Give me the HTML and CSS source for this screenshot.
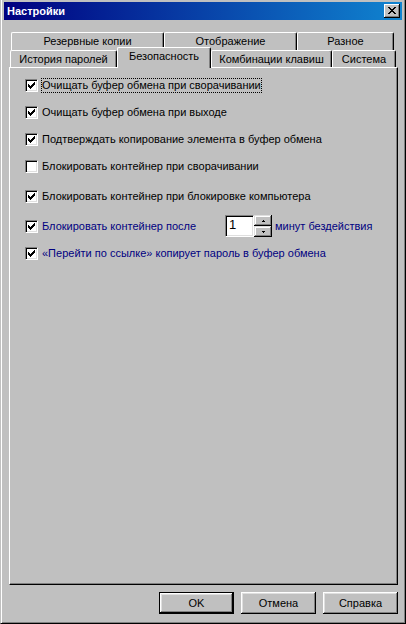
FILE: index.html
```html
<!DOCTYPE html>
<html lang="ru">
<head>
<meta charset="utf-8">
<title>Настройки</title>
<link rel="stylesheet" href="styles.css">
</head>
<body>
<div class="window">
  <div class="titlebar">
    <span class="title">Настройки</span>
    <span class="close"><svg width="8" height="7" viewBox="0 0 8 7" shape-rendering="crispEdges"><path d="M0 0h2v1H0zM6 0h2v1H6zM1 1h2v1H1zM5 1h2v1H5zM2 2h4v1H2zM3 3h2v1H3zM2 4h4v1H2zM1 5h2v1H1zM5 5h2v1H5zM0 6h2v1H0zM6 6h2v1H6z"/></svg></span>
  </div>
  <div class="content">
    <div class="tabs">
      <div class="tabrow tabrow-top">
        <div class="tab w-backup">Резервные копии</div>
        <div class="tab w-view">Отображение</div>
        <div class="tab w-misc">Разное</div>
      </div>
      <div class="tabrow tabrow-bottom">
        <div class="tab w-history">История паролей</div>
        <div class="tab tab-active w-security">Безопасность</div>
        <div class="tab w-keys">Комбинации клавиш</div>
        <div class="tab w-system">Система</div>
      </div>
    </div>
    <div class="panel">
      <div class="row r1">
        <span class="cb"><svg width="7" height="7" viewBox="0 0 7 7" shape-rendering="crispEdges"><path d="M0 2h1v3H0zM1 3h1v3H1zM2 4h1v3H2zM3 3h1v3H3zM4 2h1v3H4zM5 1h1v3H5zM6 0h1v3H6z"/></svg></span>
        <span class="label focus">Очищать буфер обмена при сворачивании</span>
      </div>
      <div class="row">
        <span class="cb"><svg width="7" height="7" viewBox="0 0 7 7" shape-rendering="crispEdges"><path d="M0 2h1v3H0zM1 3h1v3H1zM2 4h1v3H2zM3 3h1v3H3zM4 2h1v3H4zM5 1h1v3H5zM6 0h1v3H6z"/></svg></span>
        <span class="label">Очищать буфер обмена при выходе</span>
      </div>
      <div class="row">
        <span class="cb"><svg width="7" height="7" viewBox="0 0 7 7" shape-rendering="crispEdges"><path d="M0 2h1v3H0zM1 3h1v3H1zM2 4h1v3H2zM3 3h1v3H3zM4 2h1v3H4zM5 1h1v3H5zM6 0h1v3H6z"/></svg></span>
        <span class="label">Подтверждать копирование элемента в буфер обмена</span>
      </div>
      <div class="row">
        <span class="cb"></span>
        <span class="label">Блокировать контейнер при сворачивании</span>
      </div>
      <div class="row r5">
        <span class="cb"><svg width="7" height="7" viewBox="0 0 7 7" shape-rendering="crispEdges"><path d="M0 2h1v3H0zM1 3h1v3H1zM2 4h1v3H2zM3 3h1v3H3zM4 2h1v3H4zM5 1h1v3H5zM6 0h1v3H6z"/></svg></span>
        <span class="label">Блокировать контейнер при блокировке компьютера</span>
      </div>
      <div class="row r6 blue">
        <span class="cb"><svg width="7" height="7" viewBox="0 0 7 7" shape-rendering="crispEdges"><path d="M0 2h1v3H0zM1 3h1v3H1zM2 4h1v3H2zM3 3h1v3H3zM4 2h1v3H4zM5 1h1v3H5zM6 0h1v3H6z"/></svg></span>
        <span class="label label-fixed">Блокировать контейнер после</span>
        <span class="edit">1</span>
        <span class="spin">
          <span class="spinbtn"><svg width="3" height="2" viewBox="0 0 3 2" shape-rendering="crispEdges"><path d="M1 0h1v1H1zM0 1h3v1H0z"/></svg></span>
          <span class="spinbtn"><svg width="3" height="2" viewBox="0 0 3 2" shape-rendering="crispEdges"><path d="M0 0h3v1H0zM1 1h1v1H1z"/></svg></span>
        </span>
        <span class="after">минут бездействия</span>
      </div>
      <div class="row r7 blue">
        <span class="cb"><svg width="7" height="7" viewBox="0 0 7 7" shape-rendering="crispEdges"><path d="M0 2h1v3H0zM1 3h1v3H1zM2 4h1v3H2zM3 3h1v3H3zM4 2h1v3H4zM5 1h1v3H5zM6 0h1v3H6z"/></svg></span>
        <span class="label">«Перейти по ссылке» копирует пароль в буфер обмена</span>
      </div>
    </div>
    <div class="buttons">
      <button class="btn btn-default">OK</button>
      <button class="btn">Отмена</button>
      <button class="btn">Справка</button>
    </div>
  </div>
</div>
</body>
</html>
```

FILE: styles.css
```css
* { box-sizing: border-box; }
html, body { margin: 0; padding: 0; background: #c0c0c0; }
body {
  font-family: "Liberation Sans", Arial, sans-serif;
  font-size: 11px;
  color: #000;
}
.window {
  width: 406px;
  height: 624px;
  background: #c0c0c0;
  border-left: 1px solid #c0c0c0;
  border-right: 1px solid #000;
  border-bottom: 1px solid #000;
  box-shadow: inset 1px 0 #fff, inset -1px -1px #808080;
  padding: 2px 3px 2px 3px;
  display: flex;
  flex-direction: column;
}
.titlebar {
  height: 18px;
  background: linear-gradient(90deg, #000080, #1084d0);
  display: flex;
  align-items: center;
  justify-content: space-between;
  padding: 0 2px 0 3px;
}
.title {
  color: #fff;
  font-weight: bold;
  font-size: 11px;
  line-height: 13px;
}
.close {
  width: 16px;
  height: 14px;
  background: #c0c0c0;
  box-shadow: inset -1px -1px #000, inset 1px 1px #fff, inset -2px -2px #808080;
  display: flex;
  align-items: center;
  justify-content: center;
  padding: 0 1px 1px 0;
}
.close svg { display: block; }
.content {
  padding: 12px 0 0 5px;
  display: flex;
  flex-direction: column;
}
.tabs { display: flex; flex-direction: column; width: 389px; }
.tabrow { display: flex; }
.tabrow-top { height: 18px; padding-left: 2px; }
.tabrow-bottom { height: 17px; padding-left: 1px; align-items: flex-end; }
.tab {
  height: 100%;
  border-top: 1px solid #fff;
  border-left: 1px solid #fff;
  border-right: 1px solid #000;
  border-radius: 2px 2px 0 0;
  box-shadow: inset -1px 0 #808080;
  background: #c0c0c0;
  display: flex;
  justify-content: center;
  align-items: center;
  line-height: 13px;
  white-space: nowrap;
  padding-bottom: 1px;
}
.tabrow-bottom .tab { padding-bottom: 0; }
.tab-active {
  height: 21px;
  margin-bottom: -1px;
  position: relative;
  z-index: 2;
  padding-bottom: 4px !important;
}
.w-backup { width: 153px; }
.w-view { width: 133px; }
.w-misc { width: 97px; }
.w-history { width: 107px; }
.w-security { width: 94px; }
.w-keys { width: 121px; }
.w-system { width: 64px; }
.panel {
  position: relative;
  z-index: 1;
  width: 389px;
  height: 518px;
  border: 1px solid;
  border-color: #fff #000 #000 #fff;
  box-shadow: inset -1px -1px #808080;
  padding: 10px 0 0 15px;
  display: flex;
  flex-direction: column;
  gap: 12px;
}
.row { display: flex; align-items: center; height: 15px; }
.r1 { margin-top: 0; }
.r5 { margin-top: 3px; }
.r6 { height: 22px; margin-top: -1px; }
.r7 { margin-top: -3px; }
.blue { color: #000080; }
.cb {
  width: 13px;
  height: 13px;
  flex: none;
  background: #fff;
  border-top: 1px solid #808080;
  border-left: 1px solid #808080;
  border-right: 1px solid #fff;
  border-bottom: 1px solid #fff;
  box-shadow: inset 1px 1px #000, inset -1px -1px #dfdfdf;
  padding: 2px;
  margin-right: 3px;
}
.cb svg { display: block; }
.label {
  border: 1px dotted transparent;
  line-height: 13px;
  white-space: nowrap;
}
.label.focus { border-color: #000; }
.label-fixed { width: 184px; }
.edit {
  width: 29px;
  height: 22px;
  background: #fff;
  border-top: 1px solid #808080;
  border-left: 1px solid #808080;
  border-right: 1px solid #fff;
  border-bottom: 1px solid #fff;
  box-shadow: inset 1px 1px #000, inset -1px -1px #dfdfdf;
  color: #000;
  font-size: 13px;
  line-height: 14px;
  padding: 2px 0 0 3px;
}
.spin {
  width: 18px;
  height: 22px;
  display: flex;
  flex-direction: column;
}
.spinbtn {
  height: 11px;
  background: #c0c0c0;
  box-shadow: inset -1px -1px #000, inset 1px 1px #dfdfdf, inset -2px -2px #808080, inset 2px 2px #fff;
  display: flex;
  align-items: center;
  justify-content: center;
}
.spinbtn svg { display: block; }
.after { margin-left: 3px; white-space: nowrap; }
.buttons {
  width: 389px;
  display: flex;
  justify-content: flex-end;
  gap: 7px;
  margin-top: 7px;
}
.btn {
  width: 75px;
  height: 22px;
  font: inherit;
  color: #000;
  background: #c0c0c0;
  border: 0;
  margin: 0;
  padding: 0;
  box-shadow: inset -1px -1px #000, inset 1px 1px #fff, inset -2px -2px #808080, inset 2px 2px #dfdfdf;
}
.btn-default {
  border: 1px solid #000;
}
```
